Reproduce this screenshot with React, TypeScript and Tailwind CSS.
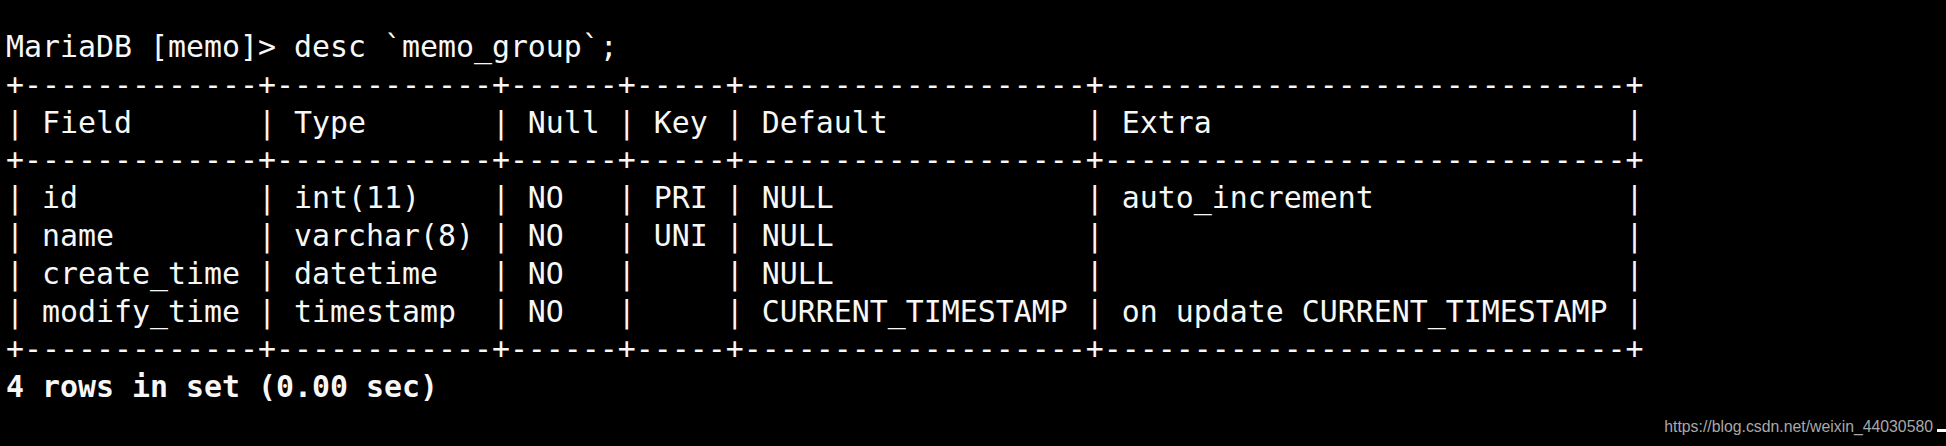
import React from "react";

const lines: { text: string; bold?: boolean }[] = [
  { text: "MariaDB [memo]> desc `memo_group`;" },
  { text: "+-------------+------------+------+-----+-------------------+-----------------------------+" },
  { text: "| Field       | Type       | Null | Key | Default           | Extra                       |" },
  { text: "+-------------+------------+------+-----+-------------------+-----------------------------+" },
  { text: "| id          | int(11)    | NO   | PRI | NULL              | auto_increment              |" },
  { text: "| name        | varchar(8) | NO   | UNI | NULL              |                             |" },
  { text: "| create_time | datetime   | NO   |     | NULL              |                             |" },
  { text: "| modify_time | timestamp  | NO   |     | CURRENT_TIMESTAMP | on update CURRENT_TIMESTAMP |" },
  { text: "+-------------+------------+------+-----+-------------------+-----------------------------+" },
  { text: "4 rows in set (0.00 sec)", bold: true },
];

export default function App() {
  return (
    <div className="relative w-[1946px] h-[446px] bg-black overflow-hidden">
      <div
        className="flex flex-col pt-[28px] pl-[6px] text-[29.9px] leading-[37.8px] text-[#f7f7f7] whitespace-pre"
        style={{ fontFamily: '"DejaVu Sans Mono", "Liberation Mono", monospace' }}
      >
        {lines.map((l, i) => (
          <div key={i} className={l.bold ? "font-bold" : "font-normal"}>
            {l.text}
          </div>
        ))}
      </div>
      <div className="absolute right-0 bottom-[10px] flex items-end gap-[4px]">
        <span
          className="text-[15.8px] leading-[18px] text-[#a9a9a9]"
          style={{ fontFamily: '"Liberation Sans", Arial, sans-serif' }}
        >
          https://blog.csdn.net/weixin_44030580
        </span>
        <span className="mb-[4px] block w-[9px] h-[3px] bg-white" />
      </div>
    </div>
  );
}
